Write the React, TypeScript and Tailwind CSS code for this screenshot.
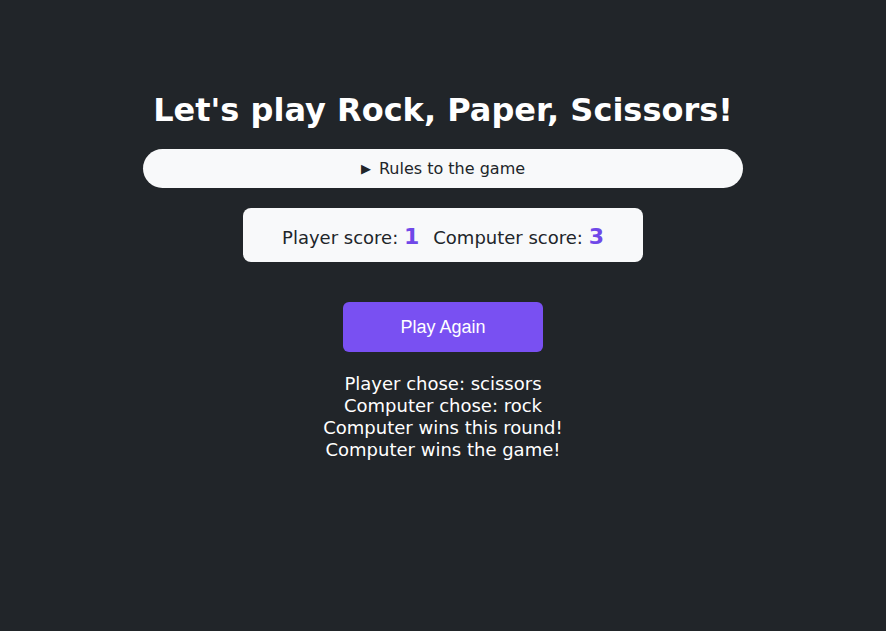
export default function App() {
  return (
    <main className="min-h-screen bg-[#212529] text-white font-['DejaVu_Sans',Verdana,sans-serif]">
      <div className="flex flex-col items-center pt-[90px]">
        <h1 className="text-[32px] leading-[40px] font-bold">Let's play Rock, Paper, Scissors!</h1>

        <details className="mt-[19px] w-[600px] bg-[#f8f9fa] text-[#212529] rounded-full">
          <summary className="h-[39px] flex items-center justify-center gap-[8px] cursor-pointer list-none text-[16px]">
            <span className="text-[13px]">▶</span>
            Rules to the game
          </summary>
        </details>

        <div className="mt-[20px] w-[400px] h-[54px] bg-[#f8f9fa] text-[#212529] rounded-[8px] flex items-center justify-center pt-[2px] text-[18px]">
          <span>
            Player score: <b className="text-[#7048e8] text-[22px]">1</b>
          </span>
          <span className="ml-[14px]">
            Computer score: <b className="text-[#7048e8] text-[22px]">3</b>
          </span>
        </div>

        <button className="mt-[40px] w-[200px] h-[50px] bg-[#7950f2] rounded-[6px] text-[18px] font-['Liberation_Sans',Arial,sans-serif]">
          Play Again
        </button>

        <div className="mt-[21px] text-center text-[18px] leading-[22px]">
          <p>Player chose: scissors</p>
          <p>Computer chose: rock</p>
          <p>Computer wins this round!</p>
          <p>Computer wins the game!</p>
        </div>
      </div>
    </main>
  );
}
